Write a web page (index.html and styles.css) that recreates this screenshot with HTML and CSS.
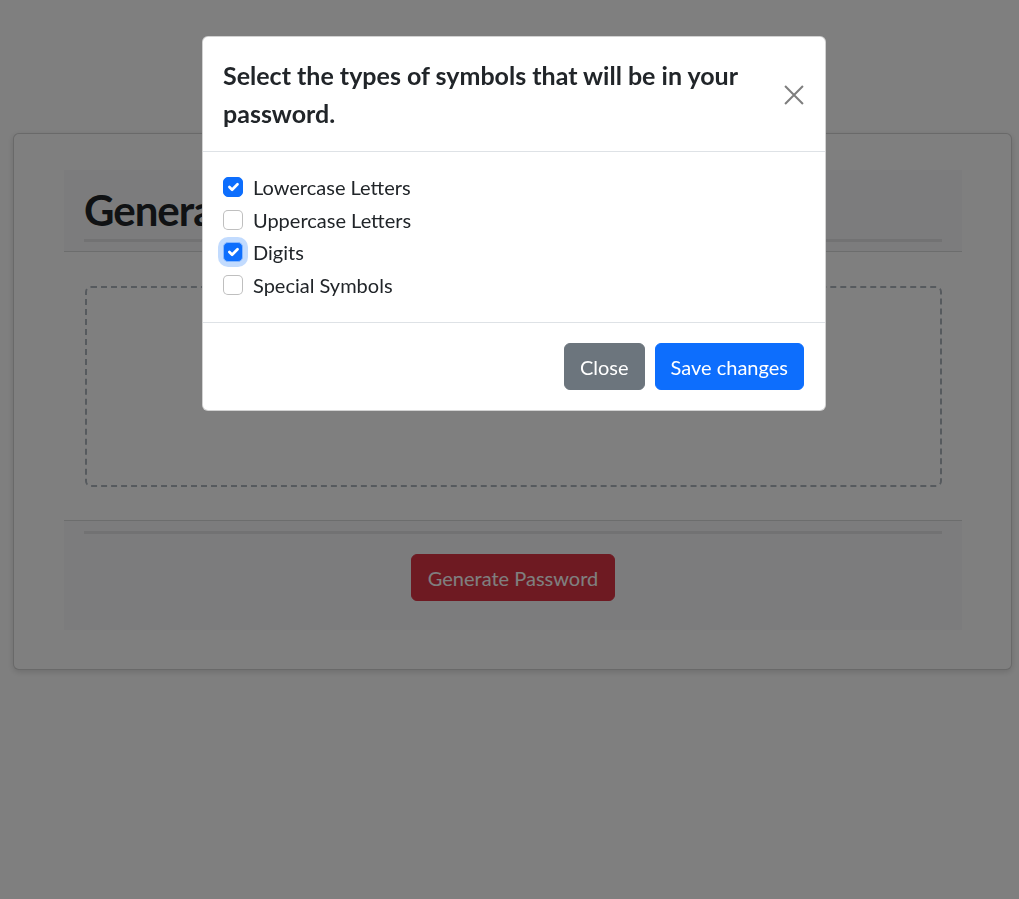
FILE: index.html
```html
<!DOCTYPE html>
<html lang="en">
<head>
<meta charset="utf-8">
<title>Password Generator</title>
<link rel="stylesheet" href="styles.css">
</head>
<body>
<div class="page">
  <div class="card">
    <div class="panel">
      <div class="panel-header">
        <h1 class="panel-title">Generate a Password</h1>
        <hr class="rule">
      </div>
      <div class="panel-body">
        <div class="output"></div>
      </div>
      <div class="panel-footer">
        <hr class="rule">
        <button class="btn btn-red" type="button">Generate Password</button>
      </div>
    </div>
  </div>
</div>

<div class="backdrop"></div>

<div class="modal-wrap">
  <div class="modal">
    <div class="modal-header">
      <h5 class="modal-title">Select the types of symbols that will be in your password.</h5>
      <button class="btn-close" type="button" aria-label="Close">
        <svg viewBox="0 0 16 16" width="22" height="22"><path d="M1.5 1.5l13 13M14.5 1.5l-13 13" stroke="#000" stroke-width="1.5" fill="none"/></svg>
      </button>
    </div>
    <div class="modal-body">
      <label class="check"><span class="box on"><svg viewBox="0 0 20 20" width="20" height="20"><path d="M6 10l3 3l6-6" fill="none" stroke="#fff" stroke-width="3" stroke-linecap="round" stroke-linejoin="round"/></svg></span><span class="check-label">Lowercase Letters</span></label>
      <label class="check"><span class="box"></span><span class="check-label">Uppercase Letters</span></label>
      <label class="check"><span class="box on focus"><svg viewBox="0 0 20 20" width="20" height="20"><path d="M6 10l3 3l6-6" fill="none" stroke="#fff" stroke-width="3" stroke-linecap="round" stroke-linejoin="round"/></svg></span><span class="check-label">Digits</span></label>
      <label class="check"><span class="box"></span><span class="check-label">Special Symbols</span></label>
    </div>
    <div class="modal-footer">
      <button class="btn btn-gray" type="button">Close</button>
      <button class="btn btn-blue" type="button">Save changes</button>
    </div>
  </div>
</div>
</body>
</html>
```

FILE: styles.css
```css
* { box-sizing: border-box; }

html, body {
  margin: 0;
  padding: 0;
  height: 100%;
  overflow: hidden;
}

body {
  font-family: "Lato", "Liberation Sans", sans-serif;
  font-size: 20px;
  line-height: 1.5;
  color: #212529;
  background: #fff;
}

.page {
  padding: 133px 7px 0 13px;
}

.card {
  width: 999px;
  height: 537px;
  border: 1px solid rgba(0, 0, 0, 0.175);
  border-radius: 6px;
  background: #fff;
  box-shadow: 0 2px 6px rgba(0, 0, 0, 0.15);
  padding: 36px 49px 0 50px;
}

.panel {
  width: 898px;
}

.panel-header {
  background: #f8f9fa;
  height: 82px;
  border-bottom: 1px solid rgba(0, 0, 0, 0.12);
  padding: 12px 20px 0 20px;
}

.panel-title {
  margin: 0;
  font-size: 42px;
  font-weight: 700;
  letter-spacing: -1px;
  line-height: 56px;
  color: #212529;
  white-space: nowrap;
  overflow: hidden;
}

.rule {
  margin: 1px 0 0 0;
  border: 0;
  height: 3px;
  background: rgba(0, 0, 0, 0.08);
}

.panel-body {
  padding: 34px 20px 33px 21px;
}

.output {
  height: 201px;
  border: 2px dashed #adb5bd;
  border-radius: 6px;
}

.panel-footer {
  background: #f8f9fa;
  border-top: 1px solid rgba(0, 0, 0, 0.12);
  padding: 10px 20px 29px 20px;
  display: flex;
  flex-direction: column;
  align-items: center;
}

.panel-footer .rule {
  width: 100%;
  margin: 0 0 20px 0;
}

.btn {
  font-family: inherit;
  font-size: 20px;
  line-height: 30px;
  padding: 7.5px 15px;
  border: 1px solid transparent;
  border-radius: 6px;
  color: #fff;
  cursor: pointer;
}

.btn-red { background: #dc3545; border-color: #dc3545; padding: 7.5px 16px; }
.btn-gray { background: #6c757d; border-color: #6c757d; }
.btn-blue { background: #0d6efd; border-color: #0d6efd; }

.backdrop {
  position: fixed;
  inset: 0;
  background: rgba(0, 0, 0, 0.5);
}

.modal-wrap {
  position: fixed;
  inset: 0;
  padding: 36px 0 0 202px;
}

.modal {
  width: 624px;
  background: #fff;
  border: 1px solid rgba(0, 0, 0, 0.175);
  border-radius: 6px;
  display: flex;
  flex-direction: column;
}

.modal-header {
  display: flex;
  align-items: center;
  padding: 20px 20px 19px 20px;
  border-bottom: 1px solid #dee2e6;
}

.modal-title {
  margin: 0;
  flex: 1;
  font-size: 25px;
  font-weight: 700;
  line-height: 37.5px;
  padding-right: 30px;
}

.btn-close {
  width: 30px;
  height: 30px;
  padding: 0;
  margin-right: -4px;
  border: 0;
  background: transparent;
  opacity: 0.5;
  display: flex;
  align-items: center;
  justify-content: center;
}

.modal-body {
  padding: 20px;
}

.check {
  display: flex;
  align-items: center;
  height: 30px;
  margin-bottom: 2.5px;
}

.box {
  width: 20px;
  height: 20px;
  border: 1px solid rgba(0, 0, 0, 0.25);
  border-radius: 5px;
  margin-right: 10px;
  background: #fff;
  display: flex;
  align-items: center;
  justify-content: center;
  flex: none;
}

.box svg { display: block; }

.box.on {
  background: #0d6efd;
  border-color: #0d6efd;
}

.box.focus {
  box-shadow: 0 0 0 5px rgba(13, 110, 253, 0.25);
  border-color: #86b7fe;
}

.check-label {
  color: #212529;
}

.modal-footer {
  display: flex;
  justify-content: flex-end;
  gap: 10px;
  padding: 20px 20px 20px 20px;
  border-top: 1px solid #dee2e6;
}

.modal-footer .btn-blue {
  margin-right: 1px;
}
```
